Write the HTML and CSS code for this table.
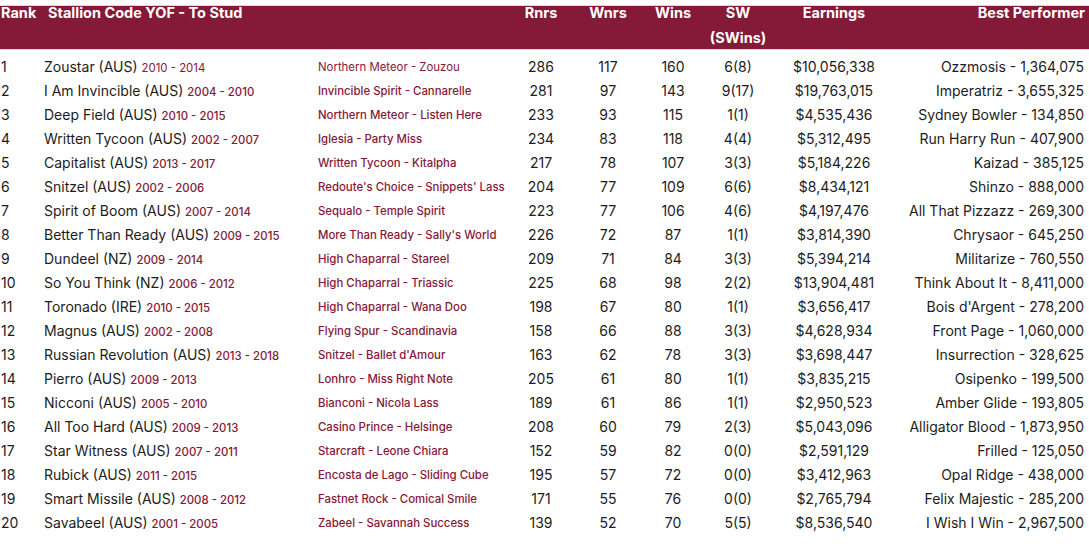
FILE: index.html
```html
<!DOCTYPE html>
<html lang="en">
<head>
<meta charset="utf-8">
<title>Leading Sires</title>
<link rel="stylesheet" href="styles.css">
</head>
<body>
<div class="table">
  <div class="row head">
    <div class="c rank">Rank</div>
    <div class="c name">Stallion Code YOF - To Stud</div>
    <div class="c breed">Breeding</div>
    <div class="c num">Rnrs</div>
    <div class="c num">Wnrs</div>
    <div class="c num">Wins</div>
    <div class="c num">SW<br>(SWins)</div>
    <div class="c num">Earnings</div>
    <div class="c best">Best Performer</div>
  </div>
  <div class="body">
    <div class="row first"><div class="c rank">1</div><div class="c name">Zoustar (AUS) <span class="yr">2010 - 2014</span></div><div class="c breed">Northern Meteor - Zouzou</div><div class="c num">286</div><div class="c num">117</div><div class="c num">160</div><div class="c num">6(8)</div><div class="c num">$10,056,338</div><div class="c best">Ozzmosis - 1,364,075</div></div>
    <div class="row"><div class="c rank">2</div><div class="c name">I Am Invincible (AUS) <span class="yr">2004 - 2010</span></div><div class="c breed">Invincible Spirit - Cannarelle</div><div class="c num">281</div><div class="c num">97</div><div class="c num">143</div><div class="c num">9(17)</div><div class="c num">$19,763,015</div><div class="c best">Imperatriz - 3,655,325</div></div>
    <div class="row"><div class="c rank">3</div><div class="c name">Deep Field (AUS) <span class="yr">2010 - 2015</span></div><div class="c breed">Northern Meteor - Listen Here</div><div class="c num">233</div><div class="c num">93</div><div class="c num">115</div><div class="c num">1(1)</div><div class="c num">$4,535,436</div><div class="c best">Sydney Bowler - 134,850</div></div>
    <div class="row"><div class="c rank">4</div><div class="c name">Written Tycoon (AUS) <span class="yr">2002 - 2007</span></div><div class="c breed">Iglesia - Party Miss</div><div class="c num">234</div><div class="c num">83</div><div class="c num">118</div><div class="c num">4(4)</div><div class="c num">$5,312,495</div><div class="c best">Run Harry Run - 407,900</div></div>
    <div class="row"><div class="c rank">5</div><div class="c name">Capitalist (AUS) <span class="yr">2013 - 2017</span></div><div class="c breed">Written Tycoon - Kitalpha</div><div class="c num">217</div><div class="c num">78</div><div class="c num">107</div><div class="c num">3(3)</div><div class="c num">$5,184,226</div><div class="c best">Kaizad - 385,125</div></div>
    <div class="row"><div class="c rank">6</div><div class="c name">Snitzel (AUS) <span class="yr">2002 - 2006</span></div><div class="c breed">Redoute's Choice - Snippets' Lass</div><div class="c num">204</div><div class="c num">77</div><div class="c num">109</div><div class="c num">6(6)</div><div class="c num">$8,434,121</div><div class="c best">Shinzo - 888,000</div></div>
    <div class="row"><div class="c rank">7</div><div class="c name">Spirit of Boom (AUS) <span class="yr">2007 - 2014</span></div><div class="c breed">Sequalo - Temple Spirit</div><div class="c num">223</div><div class="c num">77</div><div class="c num">106</div><div class="c num">4(6)</div><div class="c num">$4,197,476</div><div class="c best">All That Pizzazz - 269,300</div></div>
    <div class="row"><div class="c rank">8</div><div class="c name">Better Than Ready (AUS) <span class="yr">2009 - 2015</span></div><div class="c breed">More Than Ready - Sally's World</div><div class="c num">226</div><div class="c num">72</div><div class="c num">87</div><div class="c num">1(1)</div><div class="c num">$3,814,390</div><div class="c best">Chrysaor - 645,250</div></div>
    <div class="row"><div class="c rank">9</div><div class="c name">Dundeel (NZ) <span class="yr">2009 - 2014</span></div><div class="c breed">High Chaparral - Stareel</div><div class="c num">209</div><div class="c num">71</div><div class="c num">84</div><div class="c num">3(3)</div><div class="c num">$5,394,214</div><div class="c best">Militarize - 760,550</div></div>
    <div class="row"><div class="c rank">10</div><div class="c name">So You Think (NZ) <span class="yr">2006 - 2012</span></div><div class="c breed">High Chaparral - Triassic</div><div class="c num">225</div><div class="c num">68</div><div class="c num">98</div><div class="c num">2(2)</div><div class="c num">$13,904,481</div><div class="c best">Think About It - 8,411,000</div></div>
    <div class="row"><div class="c rank">11</div><div class="c name">Toronado (IRE) <span class="yr">2010 - 2015</span></div><div class="c breed">High Chaparral - Wana Doo</div><div class="c num">198</div><div class="c num">67</div><div class="c num">80</div><div class="c num">1(1)</div><div class="c num">$3,656,417</div><div class="c best">Bois d'Argent - 278,200</div></div>
    <div class="row"><div class="c rank">12</div><div class="c name">Magnus (AUS) <span class="yr">2002 - 2008</span></div><div class="c breed">Flying Spur - Scandinavia</div><div class="c num">158</div><div class="c num">66</div><div class="c num">88</div><div class="c num">3(3)</div><div class="c num">$4,628,934</div><div class="c best">Front Page - 1,060,000</div></div>
    <div class="row"><div class="c rank">13</div><div class="c name">Russian Revolution (AUS) <span class="yr">2013 - 2018</span></div><div class="c breed">Snitzel - Ballet d'Amour</div><div class="c num">163</div><div class="c num">62</div><div class="c num">78</div><div class="c num">3(3)</div><div class="c num">$3,698,447</div><div class="c best">Insurrection - 328,625</div></div>
    <div class="row"><div class="c rank">14</div><div class="c name">Pierro (AUS) <span class="yr">2009 - 2013</span></div><div class="c breed">Lonhro - Miss Right Note</div><div class="c num">205</div><div class="c num">61</div><div class="c num">80</div><div class="c num">1(1)</div><div class="c num">$3,835,215</div><div class="c best">Osipenko - 199,500</div></div>
    <div class="row"><div class="c rank">15</div><div class="c name">Nicconi (AUS) <span class="yr">2005 - 2010</span></div><div class="c breed">Bianconi - Nicola Lass</div><div class="c num">189</div><div class="c num">61</div><div class="c num">86</div><div class="c num">1(1)</div><div class="c num">$2,950,523</div><div class="c best">Amber Glide - 193,805</div></div>
    <div class="row"><div class="c rank">16</div><div class="c name">All Too Hard (AUS) <span class="yr">2009 - 2013</span></div><div class="c breed">Casino Prince - Helsinge</div><div class="c num">208</div><div class="c num">60</div><div class="c num">79</div><div class="c num">2(3)</div><div class="c num">$5,043,096</div><div class="c best">Alligator Blood - 1,873,950</div></div>
    <div class="row"><div class="c rank">17</div><div class="c name">Star Witness (AUS) <span class="yr">2007 - 2011</span></div><div class="c breed">Starcraft - Leone Chiara</div><div class="c num">152</div><div class="c num">59</div><div class="c num">82</div><div class="c num">0(0)</div><div class="c num">$2,591,129</div><div class="c best">Frilled - 125,050</div></div>
    <div class="row"><div class="c rank">18</div><div class="c name">Rubick (AUS) <span class="yr">2011 - 2015</span></div><div class="c breed">Encosta de Lago - Sliding Cube</div><div class="c num">195</div><div class="c num">57</div><div class="c num">72</div><div class="c num">0(0)</div><div class="c num">$3,412,963</div><div class="c best">Opal Ridge - 438,000</div></div>
    <div class="row"><div class="c rank">19</div><div class="c name">Smart Missile (AUS) <span class="yr">2008 - 2012</span></div><div class="c breed">Fastnet Rock - Comical Smile</div><div class="c num">171</div><div class="c num">55</div><div class="c num">76</div><div class="c num">0(0)</div><div class="c num">$2,765,794</div><div class="c best">Felix Majestic - 285,200</div></div>
    <div class="row"><div class="c rank">20</div><div class="c name">Savabeel (AUS) <span class="yr">2001 - 2005</span></div><div class="c breed">Zabeel - Savannah Success</div><div class="c num">139</div><div class="c num">52</div><div class="c num">70</div><div class="c num">5(5)</div><div class="c num">$8,536,540</div><div class="c best">I Wish I Win - 2,967,500</div></div>
  </div>
</div>
</body>
</html>
```

FILE: styles.css
```css
html, body {
  margin: 0;
  padding: 0;
  background: #ffffff;
}
body {
  width: 1089px;
  height: 552px;
  overflow: hidden;
  font-family: "Inter", "Lato", sans-serif;
  color: #1c1c1c;
}
.table {
  padding-top: 5px;
}
.row {
  display: grid;
  grid-template-columns: 44px 274px 192px 62px 72px 58px 72px 120px 1fr;
  padding-right: 5px;
  align-items: start;
}
.head {
  height: 45px;
  background: #851a38;
  border-top: 1px solid #e3d6da;
  border-bottom: 1px solid #e3d6da;
  box-sizing: border-box;
  color: #ffffff;
  font-weight: 700;
  font-size: 14.5px;
  line-height: 25px;
  white-space: nowrap;
}
.head .c {
  margin-top: -6px;
}
.head .name, .head .breed {
  padding-left: 4px;
}
.head .best {
  margin-right: -1px;
}
.body {
  padding-top: 5px;
}
.body .row {
  height: 24px;
  line-height: 24px;
  font-size: 14px;
  white-space: nowrap;
}
.rank {
  padding-left: 1px;
}
.num {
  text-align: center;
}
.best {
  text-align: right;
}
.yr, .breed {
  color: #861838;
  font-weight: 500;
}
.body .row .yr {
  font-size: 11.4px;
}
.body .row .breed {
  font-size: 11.4px;
}
.first .yr, .first .breed {
  font-weight: 400;
}
```
